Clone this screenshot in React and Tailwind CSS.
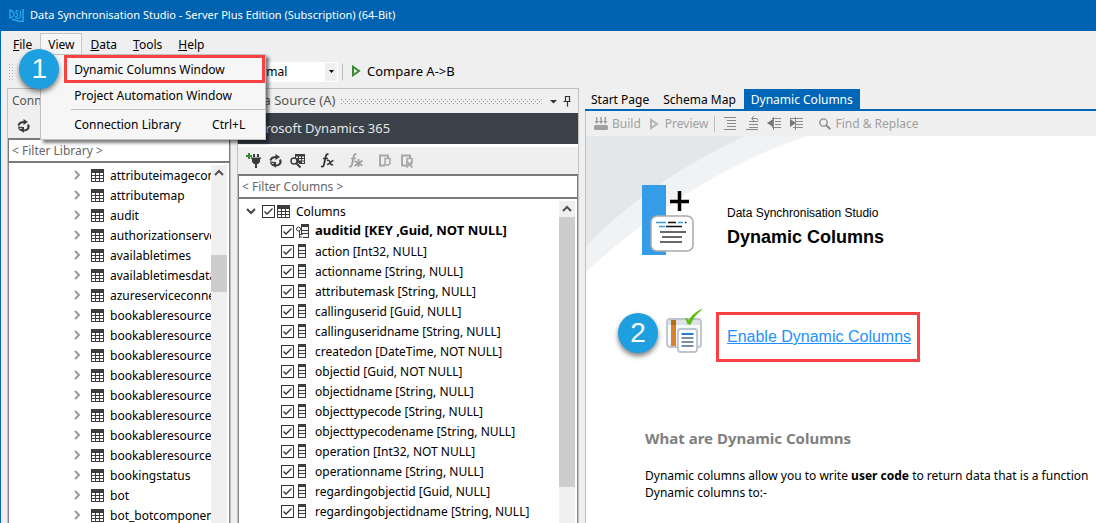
import React from "react";

const LIBRARY = [
  "attributeimageconfig", "attributemap", "audit", "authorizationserver", "availabletimes",
  "availabletimesdatasource", "azureserviceconnection", "bookableresource", "bookableresourcebooking",
  "bookableresourcebookingheader", "bookableresourcecategory", "bookableresourcecategoryassn",
  "bookableresourcecharacteristic", "bookableresourcegroup", "bookableresourcetype",
  "bookingstatus", "bot", "bot_botcomponent",
];

const COLUMNS = [
  "action [Int32, NULL]", "actionname [String, NULL]", "attributemask [String, NULL]",
  "callinguserid [Guid, NULL]", "callinguseridname [String, NULL]", "createdon [DateTime, NOT NULL]",
  "objectid [Guid, NOT NULL]", "objectidname [String, NULL]", "objecttypecode [String, NULL]",
  "objecttypecodename [String, NULL]", "operation [Int32, NOT NULL]", "operationname [String, NULL]",
  "regardingobjectid [Guid, NULL]", "regardingobjectidname [String, NULL]",
];

const TableIcon = () => (
  <svg width="13" height="13" viewBox="0 0 13 13" className="shrink-0" shapeRendering="crispEdges">
    <path fill="#3c3c3c" d="M0 0h13v13H0z" />
    <path fill="#fff" d="M1 4h3v2H1zM5 4h3v2H5zM9 4h3v2H9zM1 7h3v2H1zM5 7h3v2H5zM9 7h3v2H9zM1 10h3v2H1zM5 10h3v2H5zM9 10h3v2H9z" />
  </svg>
);

const ColumnIcon = () => (
  <svg width="8" height="14" viewBox="0 0 8 14" className="shrink-0" shapeRendering="crispEdges">
    <path fill="#3c3c3c" d="M0 0h8v14H0z" />
    <path fill="#f4f4f4" d="M1 3h6v3H1zM1 7h6v2H1zM1 10h6v3H1z" />
  </svg>
);

const KeyColumnIcon = () => (
  <svg width="13" height="14" viewBox="0 0 13 14" className="shrink-0">
    <path fill="#3c3c3c" d="M5 0h8v14H5z" />
    <path fill="#f4f4f4" d="M6 3h6v3H6zM6 7h6v2H6zM6 10h6v3H6z" />
    <path fill="#fff" d="M0 2h5v5H4v7h3v-3H4z" />
    <circle cx="2.500" cy="5" r="2" fill="#fff" stroke="#3c3c3c" />
    <path d="M3.500 7v7M3.500 10.500h3M3.500 13h3" stroke="#3c3c3c" fill="none" />
  </svg>
);

const Chevron = ({ d, color = "#9a9a9a" }) => (
  <svg width="10" height="10" viewBox="0 0 10 10" className="shrink-0">
    <path d={d} fill="none" stroke={color} strokeWidth="2" />
  </svg>
);

const RefreshIcon = () => (
  <svg width="13" height="14" viewBox="0 0 13 14">
    <path d="M1.500 6.500C2 4 4 3 7.500 3" fill="none" stroke="#3c3c3c" strokeWidth="2.200" />
    <path d="M6.500 0L11 3 6.500 6z" fill="#3c3c3c" />
    <path d="M11 5.500c1.500 3.500-.5 6-4.500 6" fill="none" stroke="#3c3c3c" strokeWidth="2.200" />
    <path d="M1 7.500l6 .5v5.800L5 12.500C2.500 12 1 10 1 7.500z" fill="#3c3c3c" />
    <path d="M2.500 9.300l2.500.2" stroke="#efefef" strokeWidth="0.800" />
  </svg>
);

const PlugIcon = () => (
  <svg width="15" height="15" viewBox="0 0 15 15">
    <path d="M3 0v6M0 3h6" stroke="#388a34" strokeWidth="2" />
    <path fill="#3c3c3c" d="M7 1h2v3H7zM11 1h2v3h-2zM5 4.500h10V6h-1v3l-2 2h-1v4H9v-4H8L6 9V6H5z" />
  </svg>
);

const SearchTableIcon = () => (
  <svg width="15" height="14" viewBox="0 0 15 14">
    <path fill="#3c3c3c" d="M5 0h10v10H9V9H5z" />
    <path fill="#efefef" d="M6 2.500h2v1.500H6zM9 2.500h2v1.500H9zM12 2.500h2v1.500h-2zM9 5h2v1.500H9zM12 5h2v1.500h-2zM12 7.500h2V9h-2z" />
    <circle cx="4" cy="7" r="3" fill="#efefef" stroke="#3c3c3c" strokeWidth="1.400" />
    <path d="M6 9l4.500 4.500" stroke="#3c3c3c" strokeWidth="2" />
  </svg>
);

const FxIcon = ({ color, star }) => (
  <svg width="15" height="15" viewBox="0 0 15 15" fill="none" stroke={color}>
    <path d="M8.500 1.500C6.500.5 6 2 5.500 4.500L4 11.500C3.500 13.500 2.500 14 1 13.300" strokeWidth="1.800" />
    <path d="M3 5.500h5" strokeWidth="1.400" />
    {star ? (
      <path d="M10.500 6v8M6.500 8l8 4.500M14.500 7.500l-8 5.500" strokeWidth="1.800" />
    ) : (
      <path d="M7 7.500c2-.8 2.500.2 3 2s1.300 3 3 2M13.500 7.500c-2 0-4.500 4.500-6.500 4" strokeWidth="1.500" />
    )}
  </svg>
);

const PasteIcon = ({ cross }) => (
  <svg width="14" height="14" viewBox="0 0 14 14" fill="none" stroke="#a8a8a8">
    <path d="M7 11.500H2v-10h8V4" strokeWidth="2" />
    <path d="M7 4.500h5v5L10.500 11H7z" fill="#efefef" strokeWidth="1.500" />
    {cross && <path d="M6.500 7l6 6.500M12.500 7l-6 6.500" strokeWidth="1.800" />}
  </svg>
);

const PlayIcon = ({ color }) => (
  <svg width="10" height="12" viewBox="0 0 10 12">
    <path d="M2 1.800v8.400L8 6z" fill="none" stroke={color} strokeWidth="2" />
  </svg>
);

const BuildIcon = () => (
  <svg width="14" height="13" viewBox="0 0 14 13" fill="#a0a0a0">
    <path d="M2 0h1.500v4H5L2.800 7 .5 4H2zM6.200 0h1.500v4h1.500L7 7 4.700 4h1.500zM10.500 0H12v4h1.500l-2.200 3L9 4h1.500z" />
    <rect y="8" width="14" height="5" rx="1.500" />
  </svg>
);

const LinesIcon = ({ kind }) => (
  <svg width="14" height="15" viewBox="0 0 14 15" fill="none" stroke="#8a8a8a" strokeWidth="1">
    {kind === "format" && <path d="M1 1.500h12M4 4.500h9M4 7.500h9M4 10.500h9M1 13.500h12" />}
    {kind === "undo" && <path d="M4 5.500h9M4 8.500h9M4 11.500h9M1 13.500h12M7 2.500h5l1 2M9 0L6.500 2.500 9 5" />}
    {kind === "out" && (
      <>
        <path d="M5 2.500h9M8 5.500h6M8 8.500h6M5 11.500h9M6.500 1v13" />
        <path d="M0 7l6-4v8z" fill="#777" stroke="none" />
      </>
    )}
    {kind === "in" && (
      <>
        <path d="M1 2.500h13M7 5.500h7M7 8.500h7M4 11.500h10M6.500 1v13" />
        <path d="M1 3l6 4-6 4z" fill="#777" stroke="none" />
      </>
    )}
  </svg>
);

const FindIcon = () => (
  <svg width="12" height="12" viewBox="0 0 12 12" fill="none" stroke="#8c8c8c">
    <circle cx="4.500" cy="4.500" r="3.700" strokeWidth="1.300" />
    <path d="M7 7l4.300 4.300" strokeWidth="2" />
  </svg>
);

const AppLogo = () => (
  <svg width="15" height="14" viewBox="0 0 15 14" fill="none" stroke="#27a9ec">
    <path d="M1 1v8l3-1.500C6 6 5 2 1 1z" strokeWidth="1.300" />
    <path d="M9.500 2C7 1 6 3.500 7.800 4.500S9 8 6 7.500" strokeWidth="1.300" />
    <path d="M11.500 1.500v6.500c-.5 1.500-2 1.500-5 1.200" strokeWidth="1.200" />
    <path d="M14 0v13M3 10.300l7 2h4" strokeWidth="1.500" />
  </svg>
);

const DynamicLogo = () => (
  <svg width="54" height="70" viewBox="0 0 54 70" className="shrink-0">
    <path fill="#359ce8" d="M1 0h24v70H1z" />
    <path d="M38.500 6v20M29 16.500h19" stroke="#000" strokeWidth="3.500" />
    <rect x="10" y="31" width="42" height="35" rx="6" fill="#fff" stroke="#a9a9a9" strokeWidth="1.500" />
    <path d="M15 37.500h10M37 37.500h5" stroke="#359ce8" strokeWidth="1.500" />
    <path d="M27 37.500h8M44 37.500h1.500M25 41.500h16" stroke="#111" strokeWidth="1.500" />
    <path d="M18 41.500h6" stroke="#359ce8" strokeWidth="1.500" />
    <path d="M19 47h26M21 52h20M19 57h22" stroke="#333a40" strokeWidth="1.500" />
  </svg>
);

const EnableIcon = () => (
  <svg width="37" height="45" viewBox="0 0 37 45" className="shrink-0">
    <rect x="1" y="10" width="34" height="28" rx="3" fill="#f6f8f9" stroke="#bcc5cd" strokeWidth="1.800" />
    <path fill="#dde2e6" d="M2 11h32v5H2z" />
    <path fill="#d9822b" d="M5 11h5v26H5z" />
    <path fill="#b96a18" d="M5 11h5v5H5z" />
    <rect x="12" y="20" width="19" height="23" rx="2.500" fill="#fff" stroke="#bcc5cd" strokeWidth="1.800" />
    <path d="M15.500 25h12" stroke="#2a7fd0" strokeWidth="2" />
    <path d="M15.500 29h12M15.500 33h12M15.500 37h12" stroke="#7b8fa3" strokeWidth="2" />
    <path d="M19 9.500c1.500-.8 2.500 0 3.500 2C25 7 30 2.500 35.500 0c.5 0 .5.600 0 1C31 4.500 27 9.500 24.500 15.500h-3C21 13 20 11 19 9.500z" fill="#5cbf14" />
  </svg>
);

const Tick = ({ label }) => (
  <span className="grid shrink-0">
    <input type="checkbox" defaultChecked aria-label={label} className="peer col-start-1 row-start-1 size-[13px] appearance-none border border-[#333] bg-white" />
    <svg width="13" height="13" viewBox="0 0 13 13" className="pointer-events-none invisible col-start-1 row-start-1 peer-checked:visible">
      <path d="M2.500 6.500L5 9l5.500-5.500" fill="none" stroke="#333" strokeWidth="1.300" />
    </svg>
  </span>
);

const Sep = () => <span className="h-4 w-px shrink-0 bg-[#bdbdbd]" />;

const Grip = ({ id, stagger, className }) => (
  <svg className={className} aria-hidden="true">
    <pattern id={id} width={stagger ? 4 : 3} height={stagger ? 4 : 3} patternUnits="userSpaceOnUse">
      <path fill={stagger ? "#8c8c8c" : "#b0b0b0"} d={stagger ? "M0 0h1v1H0zM2 2h1v1H2z" : "M0 0h1v1H0z"} />
    </pattern>
    <rect width="100%" height="100%" fill={`url(#${id})`} />
  </svg>
);

const ScrollBar = ({ children }) => (
  <div className="mr-0.5 flex w-4 shrink-0 flex-col bg-[#f0f0f0]">
    <span className="grid h-4 shrink-0 place-items-center">
      <Chevron d="M1 7l4-4 4 4" color="#505050" />
    </span>
    {children}
  </div>
);

const Badge = ({ children, className }) => (
  <span className={"absolute grid size-10 place-items-center rounded-full bg-[#1d9fe0] font-['Liberation_Sans',sans-serif] text-[28px] leading-none text-white shadow-[0_3px_5px_rgba(0,0,0,0.5)] " + className}>
    {children}
  </span>
);

const IconButton = ({ label, children }) => (
  <button type="button" aria-label={label} className="grid w-[22px] place-items-center">{children}</button>
);

const MenuItem = ({ children }) => (
  <button type="button" className="block px-2 pt-0.5 text-left"><span className="underline">{children[0]}</span>{children.slice(1)}</button>
);

export default function App() {
  return (
    <div className="flex h-screen flex-col overflow-hidden border-l border-[#0067b8] bg-[#efefef] font-['Noto_Sans',sans-serif] text-xs text-black">
      <header className="flex h-[31px] shrink-0 items-center gap-1.5 bg-[#0063b1] pl-2 text-[11px] text-white">
        <AppLogo />
        <h1>Data Synchronisation Studio - Server Plus Edition (Subscription) (64-Bit)</h1>
      </header>

      <nav className="flex h-6 shrink-0 items-stretch pt-0.5 pl-1">
        <MenuItem>File</MenuItem>
        <div className="relative flex">
          <button type="button" className="border border-b-0 border-[#c6c6c6] bg-[#f6f6f6] px-[7px]">View</button>
          <div className="absolute top-[21px] left-0 z-10 w-[226px] border border-[#c0c0c0] bg-[#f6f6f6] pb-px shadow-[3px_3px_3px_rgba(0,0,0,0.5)]">
            <button type="button" className="ml-[23px] block h-7 w-[201px] border-3 border-[#fb4141] pt-0.5 pl-[7px] text-left">Dynamic Columns Window</button>
            <button type="button" className="block h-[26px] w-full pl-[33px] text-left">Project Automation Window</button>
            <hr className="ml-[30px] border-[#c0c0c0]" />
            <button type="button" className="flex h-7 w-full items-center justify-between pt-0.5 pr-5 pl-[33px]">
              <span>Connection Library</span><span>Ctrl+L</span>
            </button>
            <Badge className="-top-1.5 -left-[22px]">1</Badge>
          </div>
        </div>
        <MenuItem>Data</MenuItem>
        <MenuItem>Tools</MenuItem>
        <MenuItem>Help</MenuItem>
      </nav>

      <div className="flex h-[33px] shrink-0 items-center pl-2 text-[13px]">
        <Grip id="toolbar-grip" className="h-4 w-1.5" />
        <div className="ml-[226px] grid h-5 w-[97px] items-center bg-white">
          <select aria-label="Log level" defaultValue="Normal" className="col-start-1 row-start-1 h-5 w-full appearance-none pl-1 text-xs">
            <option>Normal</option>
          </select>
          <span className="pointer-events-none col-start-1 row-start-1 mr-px grid h-[18px] w-3 place-items-center justify-self-end bg-[#efefef]">
            <svg width="5" height="3" viewBox="0 0 5 3"><path d="M0 0h5L2.500 3z" /></svg>
          </span>
        </div>
        <span className="ml-1 flex items-center"><Sep /></span>
        <button type="button" className="ml-2 flex items-center gap-1.5"><PlayIcon color="#388a34" />Compare A-&gt;B</button>
      </div>

      <main className="flex min-h-0 flex-1 gap-1.5 pl-1.5">
        <section className="flex w-56 shrink-0 flex-col border-x border-t border-[#c0c0c0]">
          <h2 className="h-6 shrink-0 pt-1 pl-1 text-[#555]">Connection Library</h2>
          <div className="flex h-[25px] shrink-0 items-center pl-1"><IconButton label="Refresh connections"><RefreshIcon /></IconButton></div>
          <input aria-label="Filter library" placeholder="< Filter Library >" className="h-[25px] w-full shrink-0 border-2 border-x border-[#7a7a7a] bg-white px-[3px] placeholder:text-[#666]" />
          <div className="flex min-h-0 flex-1 border-x border-[#828790] bg-white pt-0.5">
            <ul className="min-w-0 flex-1 overflow-hidden">
              {LIBRARY.map((name) => (
                <li key={name} className="flex h-5 items-center pl-[63px] whitespace-nowrap">
                  <Chevron d="M3 1l4 4-4 4" />
                  <span className="mr-1.5 ml-[9px]"><TableIcon /></span>
                  <span className="pt-0.5">{name}</span>
                </li>
              ))}
            </ul>
            <ScrollBar><span className="mt-[74px] h-[37px] bg-[#cdcdcd]" /></ScrollBar>
          </div>
        </section>

        <section className="flex w-[342px] shrink-0 flex-col border-x border-t border-[#c0c0c0]">
          <div className="flex h-6 shrink-0 items-center pr-1.5 pl-1">
            <h2 className="text-[13px] text-[#555]">Data Source (A)</h2>
            <Grip id="panel-grip" stagger className="mx-1.5 h-[5px] w-0 flex-1" />
            <svg width="24" height="12" viewBox="0 0 24 12">
              <path d="M2 5h7L5.500 8.500z" fill="#333" />
              <path d="M17.500 1v6M21.500 1v6M17 1.500h5M15.500 6.500h7M19.500 7v4.500" stroke="#333" strokeWidth="1.200" fill="none" />
            </svg>
          </div>
          <h3 className="h-[31px] shrink-0 bg-[#3a4149] pt-[7px] pl-1.5 text-[13px] text-[#e6e6e6]">Microsoft Dynamics 365</h3>
          <div className="flex h-[30px] shrink-0 items-center border-t-3 border-white pl-1">
            <IconButton label="Connect"><PlugIcon /></IconButton>
            <IconButton label="Refresh"><RefreshIcon /></IconButton>
            <IconButton label="Preview data"><SearchTableIcon /></IconButton>
            <span className="mr-1.5 ml-0.5"><Sep /></span>
            <IconButton label="Add function"><FxIcon color="#333" /></IconButton>
            <span className="w-1.5" />
            <IconButton label="Edit functions"><FxIcon color="#a0a0a0" star /></IconButton>
            <span className="mr-1 ml-1"><Sep /></span>
            <IconButton label="Copy"><PasteIcon /></IconButton>
            <IconButton label="Remove"><PasteIcon cross /></IconButton>
          </div>
          <input aria-label="Filter columns" placeholder="< Filter Columns >" className="h-[25px] w-full shrink-0 border-2 border-x border-[#7a7a7a] bg-white px-[3px] placeholder:text-[#666]" />
          <div className="flex min-h-0 flex-1 border-x border-[#828790] bg-white pt-0.5">
            <ul className="min-w-0 flex-1 overflow-hidden whitespace-nowrap">
              <li className="flex h-5 items-center pl-[7px]">
                <Chevron d="M1 3l4 4 4-4" color="#444" />
                <span className="mr-0.5 ml-1.5"><Tick label="Columns" /></span>
                <TableIcon /><span className="ml-1.5 pt-0.5">Columns</span>
              </li>
              <li className="flex h-5 items-center pl-[42px] text-[13px] font-bold">
                <Tick label="auditid" /><span className="mr-1.5 ml-0.5"><KeyColumnIcon /></span><span>auditid [KEY ,Guid, NOT NULL]</span>
              </li>
              {COLUMNS.map((name) => (
                <li key={name} className="flex h-5 items-center pl-[42px]">
                  <Tick label={name} /><span className="mr-[9px] ml-1"><ColumnIcon /></span><span className="pt-0.5">{name}</span>
                </li>
              ))}
            </ul>
            <ScrollBar><span className="h-[270px] shrink-0 bg-[#cdcdcd]" /></ScrollBar>
          </div>
        </section>

        <section className="flex min-w-0 flex-1 flex-col">
          <div className="flex h-[23px] shrink-0 border-b-2 border-[#0067b8] pt-px">
            <button type="button" className="pt-0.5 pr-2 pl-1.5">Start Page</button>
            <button type="button" className="pt-0.5 pr-2 pl-1.5">Schema Map</button>
            <button type="button" className="bg-[#0067b8] px-[7px] pt-0.5 text-white">Dynamic Columns</button>
          </div>
          <div className="flex h-[25px] shrink-0 items-center border-l border-[#c0c0c0] pl-2 text-[#a0a0a0]">
            <button type="button" className="flex items-center gap-1"><BuildIcon />Build</button>
            <button type="button" className="mr-1.5 ml-2 flex items-center gap-1.5"><PlayIcon color="#b5b5b5" />Preview</button>
            <Sep />
            <span className="ml-1 flex">
              <IconButton label="Format"><LinesIcon kind="format" /></IconButton>
              <IconButton label="Undo format"><LinesIcon kind="undo" /></IconButton>
              <IconButton label="Outdent"><LinesIcon kind="out" /></IconButton>
              <IconButton label="Indent"><LinesIcon kind="in" /></IconButton>
            </span>
            <span className="mr-2 ml-1"><Sep /></span>
            <button type="button" className="flex items-center gap-1"><FindIcon />Find &amp; Replace</button>
          </div>
          <article className="grid min-h-0 flex-1 overflow-hidden border-l border-[#c0c0c0] bg-white">
            <svg width="222" height="137" viewBox="0 0 222 137" className="col-start-1 row-start-1">
              <path fill="#f0f2f4" d="M0 0H221Q106 38 0 136Z" />
              <path fill="#e3e7ea" d="M0 0H159Q64 44 0 110Z" />
            </svg>
            <div className="col-start-1 row-start-1 min-w-0 pt-[49px] pl-[55px]">
              <div className="flex items-start gap-8 font-['Liberation_Sans',sans-serif]">
                <DynamicLogo />
                <div className="pt-5">
                  <p className="leading-4">Data Synchronisation Studio</p>
                  <h2 className="mt-1 text-lg leading-6 font-bold">Dynamic Columns</h2>
                </div>
              </div>
              <div className="relative mt-[54px] flex pl-[25px] font-['Liberation_Sans',sans-serif]">
                <Badge className="top-1 -left-[23px]">2</Badge>
                <EnableIcon />
                <div className="mt-[3px] ml-[13px] border-3 border-[#fb4141] py-2.5 pr-1.5 pl-2">
                  <a href="#enable" className="text-base leading-6 text-[#1e90ff] underline">Enable Dynamic Columns</a>
                </div>
              </div>
              <h3 className="mt-16 ml-1 text-[15px] leading-6 font-bold text-[#808080]">What are Dynamic Columns</h3>
              <p className="mt-[17px] ml-1 leading-[17px] whitespace-nowrap">
                Dynamic columns allow you to write <b>user code</b> to return data that is a function<br />Dynamic columns to:-
              </p>
            </div>
          </article>
        </section>
      </main>
    </div>
  );
}
